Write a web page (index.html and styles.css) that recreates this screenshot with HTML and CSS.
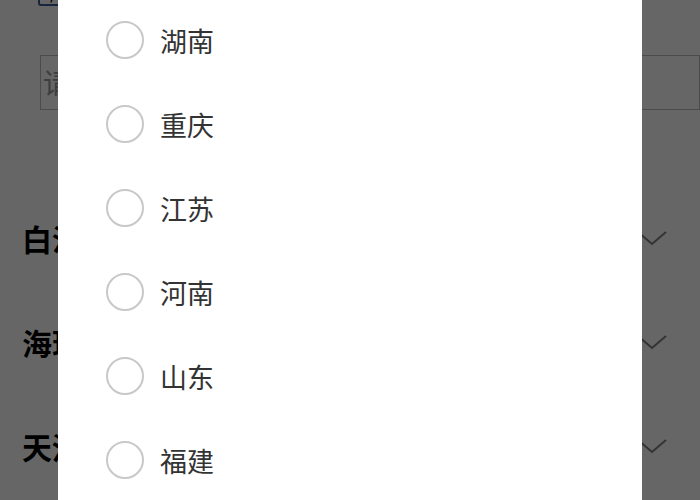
FILE: index.html
```html
<!DOCTYPE html>
<html lang="zh">
<head>
<meta charset="utf-8">
<link rel="stylesheet" href="styles.css">
</head>
<body>
<div class="page">
  <div class="tag-row"><div class="tag">/</div></div>
  <div class="search">请输入城市名称</div>
  <div class="rows">
    <div class="row"><span class="row-title">白沙区</span>
      <svg class="chev" width="30" height="16" viewBox="0 0 30 16"><polyline points="1,1 15,13 29,1" fill="none" stroke="#808080" stroke-width="2"/></svg></div>
    <div class="row"><span class="row-title">海珠区</span>
      <svg class="chev" width="30" height="16" viewBox="0 0 30 16"><polyline points="1,1 15,13 29,1" fill="none" stroke="#808080" stroke-width="2"/></svg></div>
    <div class="row"><span class="row-title">天河区</span>
      <svg class="chev" width="30" height="16" viewBox="0 0 30 16"><polyline points="1,1 15,13 29,1" fill="none" stroke="#808080" stroke-width="2"/></svg></div>
  </div>
</div>
<div class="overlay"></div>
<div class="dialog">
  <ul class="options">
    <li class="option"><span class="radio"></span><span class="label">湖南</span></li>
    <li class="option"><span class="radio"></span><span class="label">重庆</span></li>
    <li class="option"><span class="radio"></span><span class="label">江苏</span></li>
    <li class="option"><span class="radio"></span><span class="label">河南</span></li>
    <li class="option"><span class="radio"></span><span class="label">山东</span></li>
    <li class="option"><span class="radio"></span><span class="label">福建</span></li>
  </ul>
</div>
</body>
</html>
```
FILE: styles.css
```css
html, body {
  margin: 0;
  padding: 0;
  background: #fff;
  font-family: "Noto Sans CJK SC", "Noto Sans", sans-serif;
  overflow: hidden;
  height: 100%;
}
.page {
  width: 700px;
}
.tag-row {
  display: flow-root;
  height: 8px;
  padding-left: 38px;
}
.tag {
  width: 40px;
  height: 30px;
  margin-top: -24px;
  box-sizing: border-box;
  border: 2px solid #3d5f93;
  border-radius: 3px;
  color: #000;
  font-size: 20px;
  line-height: 26px;
  padding-left: 10px;
}
.search {
  margin: 47px 0 0 40px;
  height: 55px;
  box-sizing: border-box;
  border: 1px solid #bbb;
  font-size: 28px;
  line-height: 53px;
  color: #999;
  padding-left: 2px;
  white-space: nowrap;
  overflow: hidden;
}
.rows {
  margin-top: 76px;
}
.row {
  height: 104px;
  display: flex;
  align-items: center;
  justify-content: space-between;
  padding: 0 33px 0 22px;
}
.row-title {
  font-size: 30px;
  font-weight: 700;
  color: #000;
}
.chev {
  display: block;
  margin-top: 2px;
}
.overlay {
  position: fixed;
  inset: 0;
  background: rgba(0, 0, 0, 0.6);
}
.dialog {
  position: fixed;
  top: 0;
  bottom: 0;
  left: 58px;
  width: 584px;
  background: #fff;
  overflow: hidden;
}
.options {
  list-style: none;
  margin: -2px 0 0 0;
  padding: 0;
}
.option {
  height: 84px;
  display: flex;
  align-items: center;
  gap: 16px;
  padding-left: 48px;
}
.radio {
  width: 38px;
  height: 38px;
  box-sizing: border-box;
  border: 2px solid #c8c8c8;
  border-radius: 50%;
}
.label {
  font-size: 27px;
  color: #333;
  line-height: 1;
}
```
